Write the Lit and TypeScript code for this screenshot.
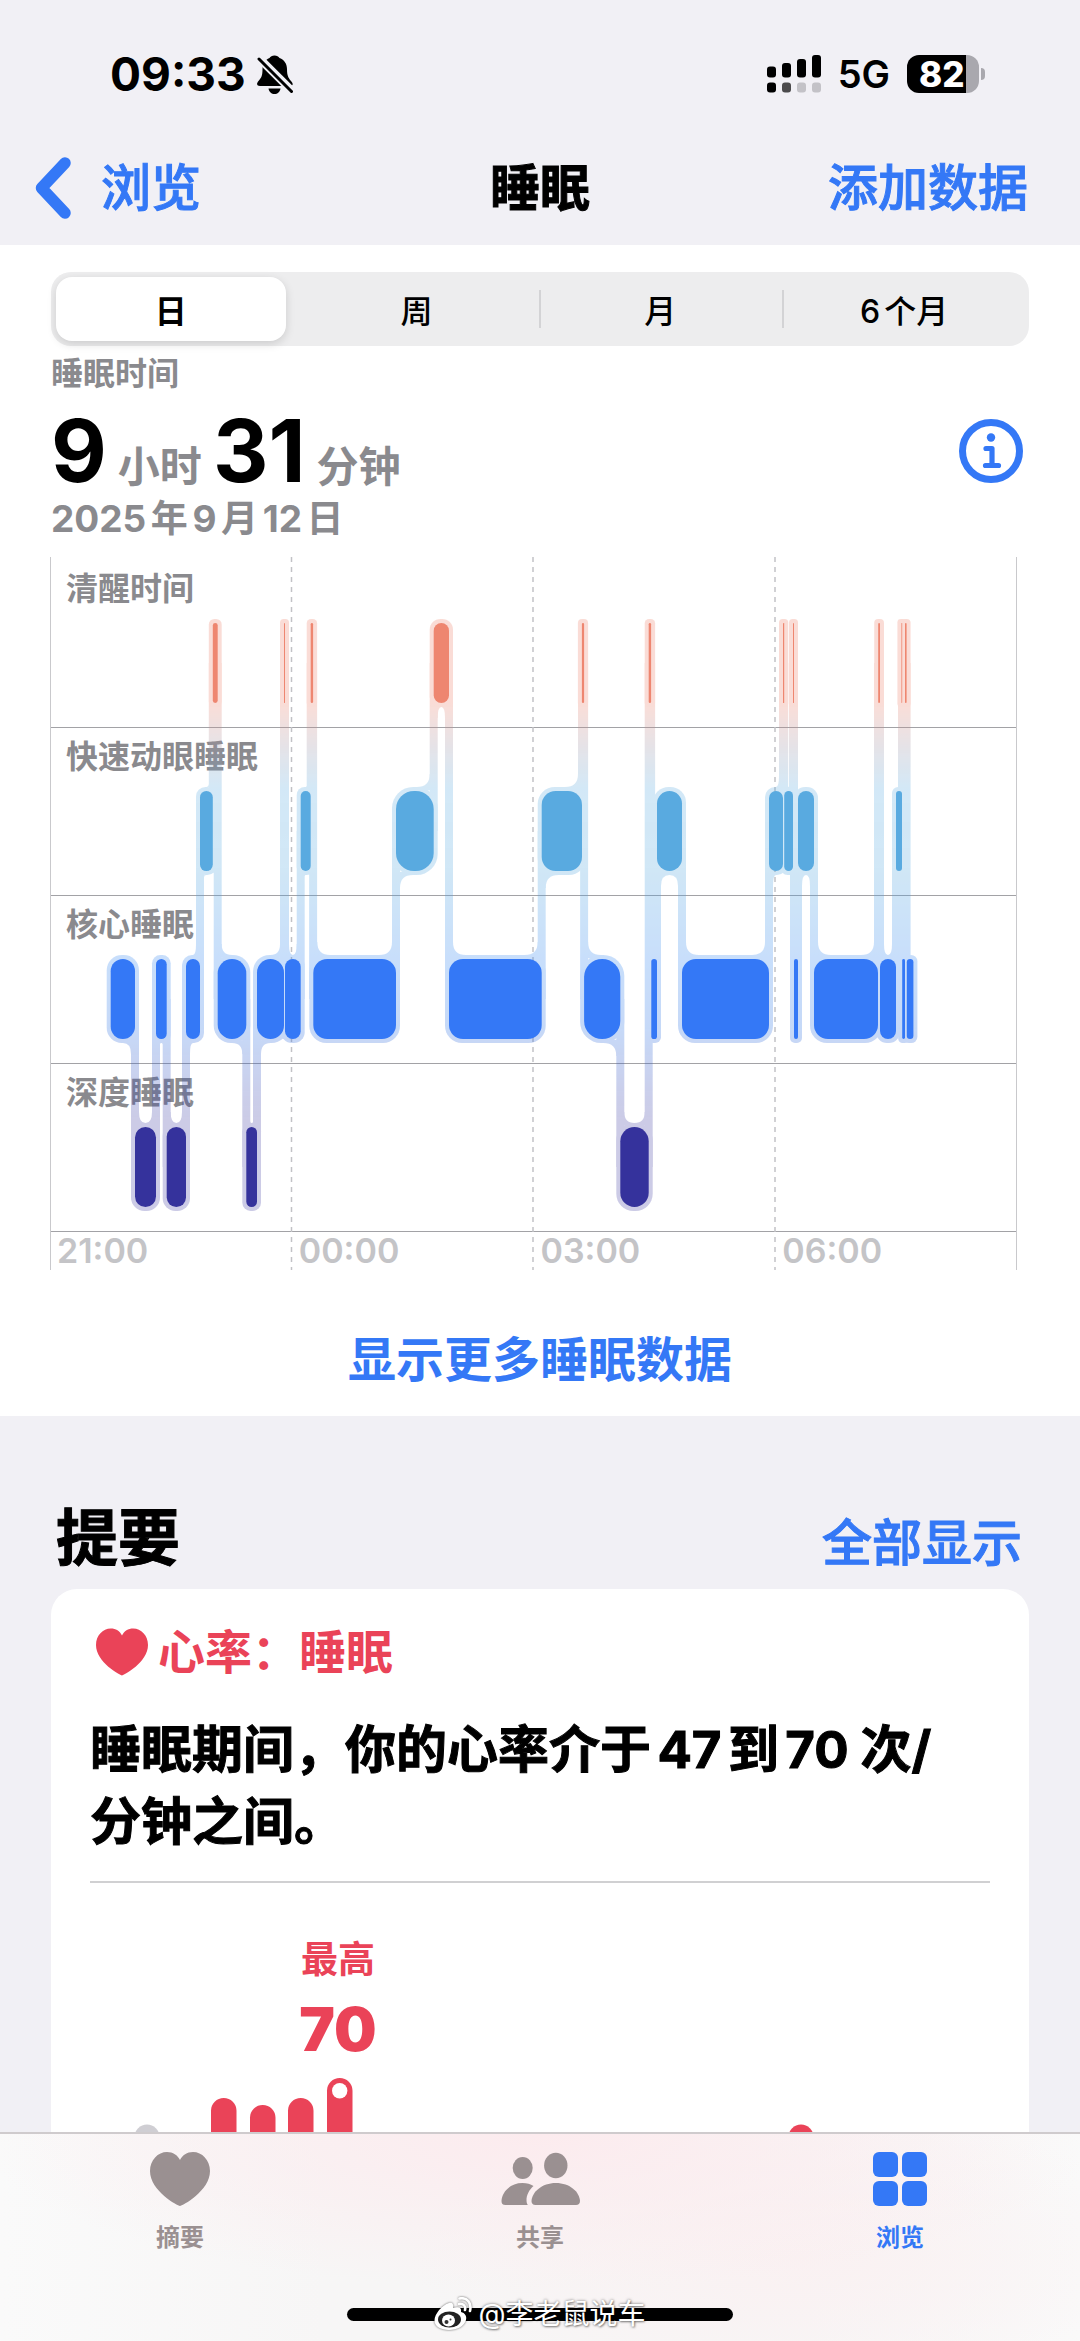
import { LitElement, html, svg, css } from "lit";
import { customElement, state } from "lit/decorators.js";

type Stage = "awake" | "rem" | "core" | "deep";

const STAGE_TOP: Record<Stage, number> = { awake: 66, rem: 234, core: 402, deep: 570 };
const BAR_HEIGHT = 80;
const PAD = 4;

/* Stage and horizontal extent of every sleep segment, in chart units. */
const SEGMENTS: [Stage, number, number][] = [
  ["core", 60.7, 85], ["deep", 85, 106], ["core", 106, 116.7], ["deep", 116.7, 136],
  ["core", 136, 150], ["rem", 150, 162.8], ["awake", 162.8, 167.7], ["core", 167.7, 196.3],
  ["deep", 196.3, 207], ["core", 207, 234], ["awake", 234, 235], ["core", 235, 250.7],
  ["rem", 250.7, 260.7], ["awake", 260.7, 263.1], ["core", 263.3, 346], ["rem", 346, 383.7],
  ["awake", 383.7, 399], ["core", 399, 491.7], ["rem", 491.7, 532], ["awake", 531.9, 534.1],
  ["core", 534.1, 570.3], ["deep", 570.3, 598.7], ["awake", 598.7, 601.1], ["core", 601.3, 607],
  ["rem", 607, 632], ["core", 632, 719], ["rem", 719, 733], ["awake", 733, 734.2],
  ["rem", 734.2, 743], ["awake", 743, 744], ["core", 744, 748], ["rem", 748, 764],
  ["core", 764, 828], ["awake", 828.2, 830], ["core", 830, 846], ["rem", 846, 852],
  ["awake", 851.4, 852.2], ["core", 852.2, 855], ["awake", 855, 856.6], ["core", 856.8, 863.4],
];

const corner = (width: number) => Math.min(width / 2, width < 40 ? 18 : 14);

const stageChart = () => {
  const shapes = [];
  for (let i = 0; i < SEGMENTS.length; i++) {
    const [stage, x0, x1] = SEGMENTS[i];
    const top = STAGE_TOP[stage] - PAD;
    const bottom = STAGE_TOP[stage] + BAR_HEIGHT + PAD;
    const w = x1 - x0 + PAD * 2;
    shapes.push(svg`<rect x=${x0 - PAD} y=${top} width=${w} height=${bottom - top} rx=${Math.min(w / 2, corner(x1 - x0) + 3)} />`);
    const next = SEGMENTS[i + 1];
    if (next) {
      const a = STAGE_TOP[stage] + BAR_HEIGHT / 2;
      const b = STAGE_TOP[next[0]] + BAR_HEIGHT / 2;
      shapes.push(svg`<rect x=${x1 - PAD} y=${Math.min(a, b)} width=${PAD * 2} height=${Math.abs(b - a)} />`);
    }
    const r = Math.min(13, (x1 - x0) / 2 - PAD);
    if (r <= 0) continue;
    const rise = r < 3 ? r : Math.max(r, 11);
    const fillet = (edge: number, dir: number, up: boolean) => {
      const y = up ? top : bottom;
      const v = up ? -rise : rise;
      shapes.push(svg`<path d="M${edge + dir * r} ${y}Q${edge} ${y} ${edge} ${y + v}H${edge - dir * 2}V${y - v / 4}H${edge + dir * r}Z" />`);
    };
    if (next) fillet(x1 - PAD, -1, STAGE_TOP[next[0]] < STAGE_TOP[stage]);
    const prev = SEGMENTS[i - 1];
    if (prev) fillet(x0 + PAD, 1, STAGE_TOP[prev[0]] < STAGE_TOP[stage]);
  }
  return html`<svg class="plot" viewBox="0 0 967 713" preserveAspectRatio="none" aria-hidden="true">
    <defs>
      <linearGradient id="tint" gradientUnits="userSpaceOnUse" x1="0" y1="0" x2="0" y2="713">
        <stop offset="0" stop-color="#ee8670" />
        <stop offset="0.205" stop-color="#ee8670" />
        <stop offset="0.325" stop-color="#59aae0" stop-opacity="0.95" />
        <stop offset="0.44" stop-color="#59aae0" />
        <stop offset="0.565" stop-color="#3c8cf2" />
        <stop offset="0.66" stop-color="#3478e6" />
        <stop offset="0.79" stop-color="#35329c" stop-opacity="0.9" />
        <stop offset="1" stop-color="#35329c" stop-opacity="0.9" />
      </linearGradient>
      <mask id="outline" maskUnits="userSpaceOnUse" x="0" y="0" width="967" height="713"><g fill="#fff">${shapes}</g></mask>
    </defs>
    ${[241.5, 483, 725].map((x) => svg`<line x1=${x} x2=${x} y1="0" y2="713" stroke="#c2c2c6" stroke-width="1.5" stroke-dasharray="5 5" />`)}
    <line x1="0.5" x2="0.5" y1="0" y2="713" stroke="#c9c9cc" stroke-width="1" />
    <line x1="966.5" x2="966.5" y1="0" y2="713" stroke="#c9c9cc" stroke-width="1" />
    <g opacity="0.28"><rect width="967" height="713" fill="url(#tint)" mask="url(#outline)" /></g>
    ${SEGMENTS.map(([stage, x0, x1]) => svg`<rect class=${stage} x=${x0} y=${STAGE_TOP[stage]} width=${x1 - x0} height=${BAR_HEIGHT} rx=${corner(x1 - x0)} />`)}
  </svg>`;
};

const heart = html`<svg class="heart" viewBox="0 0 60 54" aria-hidden="true">
  <path fill="currentColor" d="M30 54C28 54 0 39 0 19C0 8 8 0 17 0C23 0 27.500 3 30 8C32.500 3 37 0 43 0C52 0 60 8 60 19C60 39 32 54 30 54Z" />
</svg>`;

const people = html`<svg class="people" viewBox="0 0 79 54" aria-hidden="true">
  <g fill="currentColor">
    <ellipse cx="21.700" cy="16" rx="10" ry="11" />
    <path d="M4.500 53C1.500 53 0.500 51.500 0.500 49C1 40 9 31 21.500 31C26 31 29.500 32 32.500 34C28 38 25.500 43 25.500 48C25.500 50 26 52 26.800 53Z" />
    <ellipse cx="54.800" cy="13.500" rx="11.700" ry="12.800" />
    <path d="M34.500 53C31.500 53 30.500 51 30.500 49C31 40 41 31 54.800 31C69 31 78.500 40 79 49C79 51.500 77.500 53 75 53Z" />
  </g>
</svg>`;

const grid = html`<svg class="grid" viewBox="0 0 54 54" aria-hidden="true">
  <g fill="currentColor">
    <rect width="25" height="25" rx="6" /><rect x="29" width="25" height="25" rx="6" />
    <rect y="29" width="25" height="25" rx="6" /><rect x="29" y="29" width="25" height="25" rx="6" />
  </g>
</svg>`;

@customElement("app-root")
export class AppRoot extends LitElement {
  @state() private range = "日";

  static styles = css`
    :host {
      display: flex;
      flex-direction: column;
      height: 100vh;
      overflow: hidden;
      background: #f1f0f5;
      color: #000;
      font-family: Inter, "Noto Sans CJK SC", sans-serif;
      text-autospace: normal;
      --blue: #3478f6;
      --red: #ea4358;
      --gray: #8a8a8e;
    }
    * { box-sizing: border-box; }
    h1, h2, h3, p, figure { margin: 0; }
    button { border: 0; padding: 0; background: none; font: inherit; color: inherit; cursor: pointer; }
    a { color: inherit; text-decoration: none; }
    svg { display: block; flex: none; }

    .top { padding-top: 44px; }
    .status { display: flex; align-items: center; height: 60px; padding: 0 95px 0 110px; }
    .time { font-size: 46px; font-weight: 700; line-height: 60px; }
    .bell { width: 36px; height: 39px; margin-left: 11px; }
    .signal { width: 54px; height: 38px; margin-left: auto; }
    .net { margin-left: 17px; font-size: 38px; font-weight: 600; line-height: 60px; }
    .battery { position: relative; width: 72px; height: 38px; margin: 0 6px 0 17px; border-radius: 12px; background: linear-gradient(90deg, #000 59px, #a9a8ae 59px); color: #fff; font-size: 35px; font-weight: 800; line-height: 38px; padding-left: 12px; }
    .battery::after { content: ""; position: absolute; left: 74px; top: 13px; width: 4px; height: 12px; border-radius: 0 4px 4px 0; background: #a9a8ae; }
    .nav { display: grid; grid-template-columns: 1fr auto 1fr; align-items: center; height: 115px; margin-top: 26px; padding: 0 52px; font-size: 50px; line-height: 60px; }
    .back { display: flex; align-items: center; gap: 30px; margin-left: -18px; color: var(--blue); font-weight: 500; -webkit-text-stroke: 1px currentColor; }
    .back svg { width: 37px; height: 62px; }
    .nav h1 { font-size: 50px; font-weight: 700; line-height: 60px; -webkit-text-stroke: 1px currentColor; }
    .add { justify-self: end; color: var(--blue); font-weight: 500; -webkit-text-stroke: 1px currentColor; }

    main { flex: 1; min-height: 0; overflow-y: auto; scrollbar-width: none; }
    .sleep { padding: 27px 51px; background: #fff; }
    .segmented { display: grid; grid-template-columns: repeat(4, 1fr); height: 74px; padding: 5px 3px 5px 0; border-radius: 20px; background: #ededee; }
    .segmented button { position: relative; border-radius: 16px; font-size: 32px; font-weight: 500; }
    .segmented button.on { margin: 0 9px 0 5px; background: #fff; box-shadow: 0 3px 10px rgba(0, 0, 0, 0.14); font-weight: 600; }
    .segmented button + button:not(.on)::before { content: ""; position: absolute; left: 0; top: 13px; width: 2px; height: 38px; background: #d3d3d5; }
    .segmented button.on + button::before { visibility: hidden; }
    .caption { margin-top: 8px; color: var(--gray); font-size: 32px; font-weight: 600; line-height: 40px; }
    .total { display: flex; align-items: center; justify-content: space-between; margin-top: 17px; padding-right: 6px; }
    .amount { display: flex; align-items: baseline; gap: 11px; height: 80px; line-height: 80px; }
    .amount b { font-size: 86px; font-weight: 700; }
    .amount span { color: var(--gray); font-size: 42px; font-weight: 700; }
    .info { width: 64px; height: 64px; color: var(--blue); }
    .date { margin-top: 8px; color: var(--gray); font-size: 37px; font-weight: 700; line-height: 40px; }

    .chart { position: relative; margin: 18px 12px 0 -1px; }
    .row { height: 168px; padding: 9px 16px; border-bottom: 1px solid #a2a2a6; color: var(--gray); font-size: 32px; font-weight: 600; line-height: 40px; }
    .row:first-child { height: 171px; padding-top: 12px; }
    .axis { display: grid; grid-template-columns: repeat(4, 1fr); height: 38px; color: #c4c4c7; font-size: 34px; font-weight: 600; line-height: 38px; }
    .axis span { padding-left: 7px; }
    .plot { position: absolute; inset: 0; width: 100%; height: 100%; }
    .awake { fill: #ee8670; }
    .rem { fill: #59aae0; }
    .core { fill: #3478f6; }
    .deep { fill: #35329c; }
    .more { display: block; margin: 60px auto -1px; color: var(--blue); font-size: 48px; font-weight: 700; line-height: 60px; }

    .summary { padding: 83px 51px 0; }
    .head { display: flex; align-items: baseline; justify-content: space-between; height: 80px; padding: 0 7px 0 5px; line-height: 80px; }
    .head h2 { font-size: 62px; font-weight: 700; -webkit-text-stroke: 1px currentColor; }
    .head a { color: var(--blue); font-size: 50px; font-weight: 500; -webkit-text-stroke: 1px currentColor; }
    .card { margin-top: 10px; padding: 35px 39px 60px; border-radius: 26px; background: #fff; }
    .kind { display: flex; align-items: center; gap: 10px; padding-left: 6px; color: var(--red); font-size: 47px; font-weight: 700; line-height: 56px; }
    .kind .heart { width: 52px; height: 48px; }
    .text { margin-top: 34px; font-size: 51px; font-weight: 700; line-height: 72px; -webkit-text-stroke: 1px currentColor; }
    .rate { margin-top: 23px; padding-top: 53px; border-top: 2px solid #d0d0d2; color: var(--red); }
    .peak { display: flex; flex-direction: column; gap: 13px; width: 96px; margin-left: 200px; text-align: center; font-weight: 700; }
    .peak span { font-size: 37px; line-height: 48px; }
    .peak b { font-size: 60px; line-height: 64px; }
    .bars { width: 100%; margin-top: 17px; }

    .tabs { position: relative; flex: none; height: 209px; border-top: 2px solid #cfcbcd; background: radial-gradient(ellipse 52% 75% at 50% 0, #fcebee, rgba(252, 236, 239, 0) 100%), radial-gradient(ellipse 36% 70% at 74% 60%, #faf1f2, rgba(250, 241, 242, 0)), linear-gradient(90deg, #fafafa, #f7f6f6 30%, #f7f6f6 75%, #fafafa); }
    .tabs nav { display: grid; grid-template-columns: repeat(3, 1fr); padding-top: 18px; }
    .tab { display: flex; flex-direction: column; align-items: center; gap: 17px; color: #9a9091; font-size: 24px; font-weight: 600; line-height: 30px; }
    .tab.on { color: var(--blue); }
    .tab svg { height: 54px; }
    .tab .people { width: 79px; }
    .tab .grid { width: 54px; }
    .home { position: absolute; left: 50%; bottom: 20px; width: 386px; height: 13px; margin-left: -193px; border-radius: 7px; background: #000; }
    .mark { position: absolute; left: 0; right: 0; bottom: 8px; display: flex; align-items: center; justify-content: center; gap: 6px; color: #fff; font-size: 28px; font-weight: 400; line-height: 38px; text-shadow: 0 0 3px rgba(0, 0, 0, 0.55), 1px 1px 2px rgba(0, 0, 0, 0.35); }
    .mark svg { width: 38px; height: 34px; filter: drop-shadow(0 0 1px rgba(0, 0, 0, 0.6)); }
  `;

  render() {
    return html`
      <header class="top">
        <div class="status">
          <span class="time">09:33</span>
          <svg class="bell" viewBox="0 0 36 39" role="img" aria-label="静音">
            <path d="M17.500 0.500C20 0.500 21.500 1.500 22.500 3C27.500 5 30 9 30 14C30 21 31.500 23 34 26C37 29.500 35.500 31 33 31H3C0 31 -1 29 1.500 26C4.500 22.500 5.500 20.500 5.500 14C5.500 9 8 5 12.500 3C13.500 1.500 15 0.500 17.500 0.500Z" />
            <path d="M11.500 33.500H23.500C23 37 20.500 39 17.500 39C14.500 39 12 37 11.500 33.500Z" />
            <path d="M0 1L36 37" stroke="#f1f0f5" stroke-width="8" />
            <path d="M2 4L34.500 36.500" stroke="#000" stroke-width="3" stroke-linecap="round" />
          </svg>
          <svg class="signal" viewBox="0 0 54 38" role="img" aria-label="信号">
            <rect y="11.500" width="9" height="11" rx="3" /><rect x="15" y="8" width="9" height="14.500" rx="3" />
            <rect x="30" y="4" width="9" height="18.500" rx="3" /><rect x="45" y="0" width="9" height="22.500" rx="3" />
            <rect y="27.500" width="9" height="10" rx="3" /><rect x="15" y="27.500" width="9" height="10" rx="3" fill="#4b4a4c" />
            <rect x="30" y="27.500" width="9" height="10" rx="3" fill="#c3c2c7" /><rect x="45" y="27.500" width="9" height="10" rx="3" fill="#c3c2c7" />
          </svg>
          <span class="net">5G</span>
          <span class="battery">82</span>
        </div>
        <div class="nav">
          <button class="back">
            <svg viewBox="0 0 37 62" aria-hidden="true"><path d="M31 6L7.500 31L31 56" fill="none" stroke="currentColor" stroke-width="11.500" stroke-linecap="round" stroke-linejoin="round" /></svg>
            浏览
          </button>
          <h1>睡眠</h1>
          <button class="add">添加数据</button>
        </div>
      </header>

      <main>
        <section class="sleep">
          <div class="segmented" role="group" aria-label="时间范围">
            ${["日", "周", "月", "6个月"].map((r) => html`<button class=${r === this.range ? "on" : ""} aria-pressed=${r === this.range} @click=${() => (this.range = r)}>${r}</button>`)}
          </div>
          <p class="caption">睡眠时间</p>
          <div class="total">
            <div class="amount"><b>9</b><span>小时</span><b>31</b><span>分钟</span></div>
            <button class="info" aria-label="信息">
              <svg viewBox="0 0 64 64">
                <circle cx="32" cy="32" r="28.500" fill="none" stroke="currentColor" stroke-width="7" />
                <circle cx="32" cy="18.500" r="4.200" fill="currentColor" />
                <path d="M27 29.500H33V46M26.500 46.500H39.500" fill="none" stroke="currentColor" stroke-width="5.200" stroke-linecap="round" stroke-linejoin="round" />
              </svg>
            </button>
          </div>
          <p class="date">2025年9月12日</p>
          <figure class="chart" aria-label="睡眠阶段">
            ${["清醒时间", "快速动眼睡眠", "核心睡眠", "深度睡眠"].map((n) => html`<div class="row">${n}</div>`)}
            <div class="axis">${["21:00", "00:00", "03:00", "06:00"].map((t) => html`<span>${t}</span>`)}</div>
            ${stageChart()}
          </figure>
          <button class="more">显示更多睡眠数据</button>
        </section>

        <section class="summary">
          <div class="head"><h2>提要</h2><a href="#all">全部显示</a></div>
          <article class="card">
            <h3 class="kind">${heart}<span>心率：睡眠</span></h3>
            <p class="text">睡眠期间，你的心率介于47到70 次/<br />分钟之间。</p>
            <figure class="rate">
              <div class="peak"><span>最高</span><b>70</b></div>
              <svg class="bars" viewBox="0 0 900 120" aria-hidden="true">
                <circle cx="57" cy="59" r="12.500" fill="#cfced3" />
                <g fill="currentColor">
                  <rect x="121" y="20" width="25.500" height="100" rx="12.700" />
                  <rect x="160" y="27" width="25.500" height="93" rx="12.700" />
                  <rect x="198" y="20" width="25.500" height="100" rx="12.700" />
                  <rect x="237" y="0" width="25.500" height="120" rx="12.700" />
                  <circle cx="711" cy="59" r="12.500" />
                </g>
                <circle cx="249.700" cy="12.700" r="7.700" fill="#fff" />
              </svg>
            </figure>
          </article>
        </section>
      </main>

      <footer class="tabs">
        <nav>
          <a class="tab" href="#summary">${heart}<span>摘要</span></a>
          <a class="tab" href="#sharing">${people}<span>共享</span></a>
          <a class="tab on" href="#browse" aria-current="page">${grid}<span>浏览</span></a>
        </nav>
        <div class="home"></div>
        <div class="mark">
          <svg viewBox="0 0 38 34" aria-hidden="true">
            <path fill="#fff" d="M15 6C18 5 20 7 19 11C24 9.500 28 10.500 27 15C31 16 33 19 32 23C30 29.500 23 33 15 33C7 33 0.500 29.500 0.500 23.500C0.500 17 8 8 15 6Z" />
            <ellipse cx="15.500" cy="22.500" rx="11.500" ry="8" fill="#222" />
            <ellipse cx="14.500" cy="23.500" rx="6.500" ry="6" fill="#fff" />
            <circle cx="12.500" cy="25" r="2" fill="#333" /><circle cx="16.500" cy="22.500" r="1" fill="#333" />
            <path d="M25 7C29 6 32 9 31 13M25.500 1.500C33 0 38 6 36 14" fill="none" stroke="#fff" stroke-width="2.600" stroke-linecap="round" />
          </svg>
          <span>@李老鼠说车</span>
        </div>
      </footer>
    `;
  }
}
